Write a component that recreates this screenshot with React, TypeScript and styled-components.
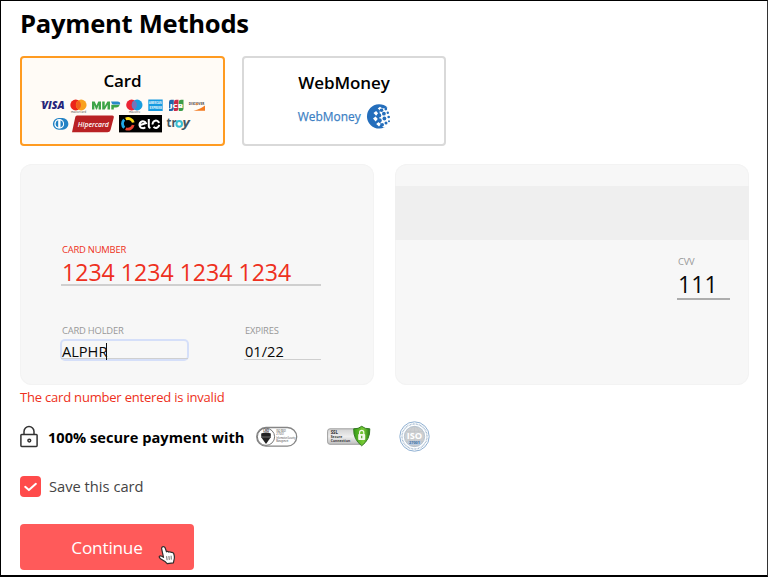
import React from "react";
import styled, { createGlobalStyle } from "styled-components";

const GlobalStyle = createGlobalStyle`
  *, *::before, *::after { box-sizing: border-box; }
  body { margin: 0; background: #fff; font-family: "Open Sans", "Noto Sans", sans-serif; color: #000; }
  h1, p { margin: 0; }
  svg { display: block; flex: none; overflow: visible; }
  svg text { font-family: "Open Sans", "Noto Sans", sans-serif; }
`;

const Page = styled.main`
  position: relative;
  width: 768px;
  height: 577px;
  overflow: hidden;
  padding: 4px 18px 0 19px;
  border: solid #000;
  border-width: 1px 1px 2px 1px;
  border-right-color: #333;
  display: flex;
  flex-direction: column;
  align-items: flex-start;
`;

const Title = styled.h1`
  height: 51px;
  line-height: 38px;
  font-size: 25.6px;
  font-weight: 700;
  letter-spacing: -0.27px;
  white-space: nowrap;
`;

const Row = styled.div<{ $gap: number }>`
  display: flex;
  gap: ${(p) => p.$gap}px;
`;

const Method = styled.button<{ $active?: boolean }>`
  width: ${(p) => (p.$active ? 205 : 204)}px;
  height: 90px;
  padding: ${(p) => (p.$active ? 10 : 12)}px 0 0;
  border: 2px solid ${(p) => (p.$active ? "#ff9b21" : "#d9d9d9")};
  border-radius: 4px;
  background: ${(p) => (p.$active ? "#fffbf6" : "#fff")};
  display: flex;
  flex-direction: column;
  align-items: center;
  font-family: inherit;
  color: #000;
`;

const MethodName = styled.span`
  height: 31px;
  line-height: 26px;
  font-size: 17px;
  font-weight: 600;
  letter-spacing: -0.1px;
`;

const LogoRow = styled.span<{ $height: number; $gap: number; $shift: number }>`
  display: flex;
  height: ${(p) => p.$height}px;
  gap: ${(p) => p.$gap}px;
  padding-left: ${(p) => p.$shift}px;
`;

const WebMoneyMark = styled.span`
  margin: 3px 1px 0 0;
`;

const Panels = styled.section`
  display: flex;
  gap: 21px;
  margin-top: 18px;
`;

const Panel = styled.div<{ $front?: boolean }>`
  width: 354px;
  height: 221px;
  border-radius: 12px;
  background: #f7f7f7;
  box-shadow: inset 0 0 0 1px #f3f3f3;
  padding: ${(p) => (p.$front ? "78px 53px 0 41px" : "22px 0 0")};
`;

const Stripe = styled.div`
  height: 54px;
  background: #efefef;
`;

const Field = styled.label<{ $width: number }>`
  display: block;
  width: ${(p) => p.$width}px;
`;

const Label = styled.span<{ $error?: boolean }>`
  display: block;
  height: 16px;
  padding-left: 1px;
  font-size: 9.4px;
  line-height: 15px;
  letter-spacing: -0.2px;
  color: ${(p) => (p.$error ? "#ee3020" : "#989898")};
`;

const Value = styled.span<{ $size: "small" | "cvv" | "large"; $error?: boolean }>`
  display: block;
  height: ${(p) => (p.$size === "small" ? 21 : p.$size === "cvv" ? 29 : 28)}px;
  line-height: ${(p) => (p.$size === "small" ? 24 : p.$size === "cvv" ? 27 : 28)}px;
  padding-left: 1px;
  font-size: ${(p) => (p.$size === "small" ? 14.6 : p.$size === "cvv" ? 22.8 : 23.1)}px;
  color: ${(p) => (p.$error ? "#ee3020" : "#080808")};
  border-bottom: ${(p) => (p.$size === "small" ? 1 : 2)}px solid
    ${(p) => (p.$size === "cvv" ? "#adadad" : "#cfcfcf")};
  white-space: pre;
`;

const FocusRing = styled.span`
  display: block;
  width: 129px;
  height: 22px;
  margin: 0 0 0 -1px;
  padding: 0 1px;
  border-radius: 5px;
  box-shadow: inset 0 0 0 2px #d5dff9;

  ${Value} {
    height: 20px;
  }
`;

const Caret = styled.i`
  display: inline-block;
  width: 1px;
  height: 17px;
  margin-left: -1px;
  background: #111;
  vertical-align: -3px;
`;

const LowerFields = styled.div`
  display: flex;
  justify-content: space-between;
  margin-top: 37px;
  width: 260px;
`;

const CvvArea = styled.div`
  padding: 14px 0 0 282px;

  ${Value} {
    margin-top: 1px;
    letter-spacing: 0.2px;
  }
`;

const ErrorText = styled.p`
  height: 36px;
  line-height: 25px;
  font-size: 13px;
  letter-spacing: -0.2px;
  color: #ee3020;
`;

const Secure = styled.div`
  display: flex;
  align-items: center;
  height: 31px;
`;

const SecureText = styled.strong`
  width: 218px;
  padding-left: 10px;
  font-size: 14.6px;
  font-weight: 700;
  letter-spacing: 0.02px;
  line-height: 20px;
  white-space: nowrap;
`;

const Badge = styled.span<{ $space: number }>`
  margin-right: ${(p) => p.$space}px;
`;

const Save = styled.label`
  display: flex;
  align-items: center;
  gap: 8px;
  height: 22px;
  margin-top: 23px;
  font-size: 14.7px;
  color: #444;
`;

const Check = styled.span`
  width: 21px;
  height: 21px;
  border-radius: 4px;
  background: #ff4b4b;
`;

const Continue = styled.button`
  position: relative;
  width: 174px;
  height: 46px;
  margin-top: 27px;
  padding: 1px 0 0;
  border: 0;
  border-radius: 4px;
  background: #ff5a5a;
  color: #fff;
  font-family: inherit;
  font-size: 17.2px;
  letter-spacing: -0.2px;
`;

const Pointer = styled.svg`
  position: absolute;
  left: 138px;
  top: 21px;
`;

const Visa = () => (
  <svg width="25" height="15" viewBox="0 0 25 15">
    <text x="1.5" y="10.3" fontSize="10.6" fontWeight="800" fontStyle="italic" fill="#25247b" textLength="23" lengthAdjust="spacingAndGlyphs">VISA</text>
    <path d="M0 2.6h3.6l1.6 2.8Q3 3.3 0 2.6" fill="#25247b" />
  </svg>
);

const Mastercard = () => (
  <svg width="17" height="15" viewBox="0 0 17 15">
    <circle cx="5.7" cy="6" r="5.4" fill="#ec2419" />
    <circle cx="11.2" cy="6" r="5.4" fill="#f9a11d" />
    <path d="M8.5 1.5a5.3 5.3 0 0 1 0 9a5.3 5.3 0 0 1 0-9" fill="#f25e1c" />
    <text x="1" y="13.6" fontSize="2.6" fill="#333" textLength="15">mastercard</text>
  </svg>
);

const Mir = () => (
  <svg width="29" height="15" viewBox="0 0 29 15">
    <path d="M0 10.5v-8h2.7l1.8 4 1.8-4H9v8H6.6V6L5 10.5H4L2.4 6v4.5ZM10.2 10.5v-8h2.5v4.7l2.7-4.7H18v8h-2.5V5.8l-2.7 4.7ZM19.3 10.5V5.8h8.5Q27 8.5 24.2 8.5h-2.4v2Z" fill="#3da447" />
    <path d="M19 2.5h6.4Q28.8 2.5 28 5.5h-6.4Q19.5 5 19 2.5" fill="#2889c9" />
  </svg>
);

const Maestro = () => (
  <svg width="17" height="15" viewBox="0 0 17 15">
    <circle cx="5.6" cy="6" r="5.4" fill="#ec2435" />
    <circle cx="11.1" cy="6" r="5.4" fill="#199ddd" />
    <path d="M8.4 1.5a5.3 5.3 0 0 1 0 9a5.3 5.3 0 0 1 0-9" fill="#7872b8" />
    <text x="3" y="13.6" fontSize="2.6" fill="#333" textLength="11">maestro</text>
  </svg>
);

const Amex = () => (
  <svg width="15" height="15" viewBox="0 0 15 15">
    <rect x=".3" y=".5" width="14.4" height="11.5" fill="#179ae0" />
    <g fontSize="3" fontWeight="700" fill="#f0faff">
      <text x="1" y="5.3" textLength="12.6" lengthAdjust="spacingAndGlyphs">AMERICAN</text>
      <text x="1.5" y="9.7" textLength="12.4" lengthAdjust="spacingAndGlyphs">EXPRESS</text>
    </g>
  </svg>
);

const Jcb = () => (
  <svg width="16" height="15" viewBox="0 0 16 15">
    <path d="M3 .7h2.8v9Q5.8 12 3.5 12H1V3Q1 .7 3 .7" fill="#2166aa" />
    <path d="M8 .7h2.5v9q0 2.3-2.3 2.3H6V3Q6 .7 8 .7" fill="#cb2948" />
    <path d="M13 .7h2.5v9q0 2.3-2.1 2.3h-2.6V3q0-2.3 2.2-2.3" fill="#3b9c48" />
    <text x="1.8" y="8.5" fontSize="5.8" fontWeight="800" fill="#fff" textLength="13.2" lengthAdjust="spacingAndGlyphs">JCB</text>
  </svg>
);

const Discover = () => (
  <svg width="18" height="15" viewBox="0 0 18 15">
    <path d="M17 6.6v5.1H5.5Q13 10 17 6.6" fill="#f47b20" />
    <text x=".8" y="6.2" fontSize="3.2" fontWeight="700" fill="#47434a" textLength="15.4" lengthAdjust="spacingAndGlyphs">DISCOVER</text>
    <circle cx="8.7" cy="5.1" r="1.2" fill="#e48b45" />
  </svg>
);

const Diners = () => (
  <svg width="15" height="18" viewBox="0 0 15 18">
    <path d="M5.8 3h3.7a5.7 5.7 0 0 1 0 11.8H5.8A5.9 5.9 0 0 1 5.8 3" fill="#2382c4" />
    <circle cx="6.2" cy="8.9" r="4.9" fill="#fff" />
    <path d="M5.2 5.2v7.4a3.9 3.9 0 0 1 0-7.4M7.5 5.2a3.9 3.9 0 0 1 0 7.4Z" fill="#2382c4" />
  </svg>
);

const Hipercard = () => (
  <svg width="43" height="18" viewBox="0 0 43 18">
    <path d="M5 .5h35.3q2 0 1.5 2L38.5 15q-.6 2.3-3 2.3H0L3.3 2Q3.6.5 5 .5" fill="#b92124" />
    <text x="5.8" y="11.5" fontSize="7.6" fontStyle="italic" fontWeight="600" fill="#fff" textLength="31" lengthAdjust="spacingAndGlyphs">Hipercard</text>
  </svg>
);

const Elo = () => (
  <svg width="43" height="18" viewBox="0 0 43 18">
    <rect width="43" height="17.4" fill="#000" />
    <g fill="none" strokeWidth="2.8">
      <path d="M6.7 4.1A5.4 5.4 0 0 1 14.3 7.5" stroke="#ffdf19" />
      <path d="M5.3 12.8A5.4 5.4 0 0 1 5.2 4.8" stroke="#20a9e9" />
      <path d="M14.2 10A5.4 5.4 0 0 1 6.7 13.7" stroke="#ee4230" />
    </g>
    <path d="M20.4 10.3l6.5-2.1a3.4 3.4 0 1 0-.7 4M29.8 4v7.2q0 1.2 1.6 1.8M40 8.1a3.2 3.2 0 0 0-6.3 1.5M34.5 11.9a3.2 3.2 0 0 0 5.6-2" fill="none" stroke="#fff" strokeWidth="2" />
  </svg>
);

const Troy = () => (
  <svg width="26" height="18" viewBox="0 0 26 18">
    <g fontSize="12" fontWeight="700" fill="#425663">
      <text x=".6" y="12.2" textLength="10" lengthAdjust="spacingAndGlyphs">tr</text>
      <text x="16.5" y="12.2" textLength="7.3" lengthAdjust="spacingAndGlyphs" fontStyle="italic">y</text>
    </g>
    <circle cx="13.2" cy="8.9" r="2.8" fill="none" stroke="#36bdd2" strokeWidth="2" />
  </svg>
);

const WebMoneyLogo = () => (
  <svg width="94" height="26" viewBox="0 0 94 26">
    <text x=".8" y="17.4" fontSize="13.5" fontWeight="500" fill="#3c7fc4" stroke="#3c7fc4" strokeWidth=".25" textLength="63" lengthAdjust="spacingAndGlyphs">WebMoney</text>
    <path d="M90.5 3.5A12.2 12.2 0 1 0 91 20.8L88 12Z" fill="#246ebc" />
    <g fill="#fff">
      <path d="M80.7 4.4l2.3-1.7 2.5 1.7-2.3 2ZM76.5 9l2.6-2 2.2 2.4-2.2 2.3ZM76 14.6l2.6-2 2.2 2.4-2.2 2.4ZM79.2 20l2.3-2 2.5 2.1-2 2.3ZM85 22.6l2.2-2 2.3 1.2-2.3 1.9Z" />
      <path d="M83 5l10-2v21l-8-2-3-7Z" />
    </g>
    <g fill="#246ebc">
      <circle cx="84.5" cy="6.3" r="1.8" /><circle cx="88.8" cy="5" r="1.4" />
      <circle cx="82.2" cy="11.4" r="2.1" /><circle cx="86.9" cy="9.7" r="1.9" /><circle cx="90.8" cy="8.7" r="1.2" />
      <circle cx="82.7" cy="16.4" r="2.1" /><circle cx="87.4" cy="14.5" r="1.9" /><circle cx="91.7" cy="13" r="1.3" />
      <circle cx="85.2" cy="20.7" r="1.8" /><circle cx="89" cy="18.9" r="1.5" /><circle cx="92" cy="17.3" r="1" />
    </g>
  </svg>
);

const Lock = () => (
  <svg width="18" height="22" viewBox="0 0 18 22" fill="none" stroke="#333" strokeWidth="1.5">
    <rect x=".9" y="8.4" width="16.2" height="12" rx=".8" />
    <path d="M4 8.3V5.5a5 5 0 0 1 10 0v2.8" />
    <circle cx="9.3" cy="14.6" r="1.4" />
  </svg>
);

const LrqaBadge = () => (
  <svg width="42" height="22" viewBox="0 0 42 22">
    <rect x=".7" y="1.5" width="40" height="18.6" rx="9.3" fill="#fff" stroke="#858585" strokeWidth="1.3" />
    <circle cx="10" cy="10.8" r="8.6" fill="#fff" stroke="#777" strokeWidth="1" />
    <path d="M5.2 7.5q4.8-2 9.6 0v3.8L10 18l-4.8-6.7Z" fill="#222" />
    <path d="M5 11h10" stroke="#aaa" strokeWidth=".6" />
    <text x="7.2" y="5.9" fontSize="3" fontWeight="700" fill="#444">LRQ</text>
    <g fontSize="2.6" fill="#333">
      <text x="20.3" y="6" textLength="10">ISO 9001</text>
      <text x="20.3" y="9.3" textLength="8">27001</text>
      <text x="20.3" y="12.6" textLength="19" lengthAdjust="spacingAndGlyphs">Information Security</text>
      <text x="20.3" y="15.9" textLength="12" lengthAdjust="spacingAndGlyphs">Management</text>
    </g>
  </svg>
);

const SslBadge = () => (
  <svg width="44" height="22" viewBox="0 0 44 22">
    <defs>
      <linearGradient id="silver" x2="0" y2="1"><stop stopColor="#d2d2d2" /><stop offset=".5" stopColor="#eee" /><stop offset="1" stopColor="#bebebe" /></linearGradient>
      <linearGradient id="green"><stop stopColor="#359b16" /><stop offset=".6" stopColor="#78cb34" /><stop offset="1" stopColor="#267c15" /></linearGradient>
    </defs>
    <rect x=".6" y="2.8" width="37" height="15.5" rx="2.4" fill="url(#silver)" stroke="#a0a0a0" />
    <g fontWeight="700" fill="#333">
      <text x="3.7" y="8" fontSize="4.4">SSL</text>
      <text x="3.7" y="12" fontSize="3.3" textLength="11.5">Secure</text>
      <text x="3.7" y="15.9" fontSize="3.3" textLength="19.5">Connection</text>
    </g>
    <path d="M34.7.3Q38 3.1 42.8 2.8 43.3 13.5 34.7 19.8 26.2 13.5 26.7 2.8 31.4 3.1 34.7.3" fill="url(#green)" stroke="#347b22" />
    <rect x="31.2" y="8.1" width="7" height="6" rx=".8" fill="#f3f8e9" />
    <path d="M32.6 8.3V6.5a2.1 2.1 0 0 1 4.2 0v1.8" fill="none" stroke="#f3f8e9" strokeWidth="1.2" />
    <path d="M34.7 9.7v2.6" stroke="#5aa632" strokeWidth="1.2" />
  </svg>
);

const IsoBadge = () => (
  <svg width="32" height="32" viewBox="0 0 32 32">
    <circle cx="15.5" cy="15.5" r="14.7" fill="#fff" stroke="#8fb0d2" strokeWidth="1" />
    <circle cx="15.5" cy="15.5" r="12.5" fill="none" stroke="#9bb3cb" strokeWidth="1.4" strokeDasharray=".8 .7" />
    <circle cx="15.5" cy="15.5" r="10.2" fill="#ccced0" stroke="#a5b9cc" strokeWidth=".7" />
    <g fill="none" stroke="#bcc0c4" strokeWidth=".4">
      <ellipse cx="15.5" cy="15.5" rx="5" ry="10" /><path d="M15.5 5.3v20.4M6.5 10.5h18M6.5 20.5h18" />
    </g>
    <text x="7.7" y="17.8" fontSize="8" fontWeight="700" fill="#fff" textLength="15.5" lengthAdjust="spacingAndGlyphs">ISO</text>
    <rect x="9" y="19.8" width="13" height="4.2" fill="#b9cbe0" />
    <text x="10" y="23.2" fontSize="3.4" fontWeight="700" fill="#426b9c" textLength="11" lengthAdjust="spacingAndGlyphs">27001</text>
  </svg>
);

export default function App() {
  return (
    <>
      <GlobalStyle />
      <Page>
        <Title>Payment Methods</Title>
        <Row $gap={17}>
          <Method $active>
            <MethodName>Card</MethodName>
            <LogoRow $height={16} $gap={4.9} $shift={1.5}>
              <Visa /><Mastercard /><Mir /><Maestro /><Amex /><Jcb /><Discover />
            </LogoRow>
            <LogoRow $height={18} $gap={4.3} $shift={0}>
              <Diners /><Hipercard /><Elo /><Troy />
            </LogoRow>
          </Method>
          <Method>
            <MethodName>WebMoney</MethodName>
            <WebMoneyMark><WebMoneyLogo /></WebMoneyMark>
          </Method>
        </Row>
        <Panels>
          <Panel $front>
            <Field $width={260}>
              <Label $error>CARD NUMBER</Label>
              <Value $size="large" $error>1234 1234 1234 1234</Value>
            </Field>
            <LowerFields>
              <Field $width={128}>
                <Label>CARD HOLDER</Label>
                <FocusRing><Value $size="small">ALPHR<Caret /></Value></FocusRing>
              </Field>
              <Field $width={77}>
                <Label>EXPIRES</Label>
                <Value $size="small">01/22</Value>
              </Field>
            </LowerFields>
          </Panel>
          <Panel>
            <Stripe />
            <CvvArea>
              <Field $width={53}>
                <Label>CVV</Label>
                <Value $size="cvv">111</Value>
              </Field>
            </CvvArea>
          </Panel>
        </Panels>
        <ErrorText>The card number entered is invalid</ErrorText>
        <Secure>
          <Lock />
          <SecureText>100% secure payment with</SecureText>
          <Badge $space={29}><LrqaBadge /></Badge>
          <Badge $space={28}><SslBadge /></Badge>
          <Badge $space={0}><IsoBadge /></Badge>
        </Secure>
        <Save>
          <Check>
            <svg width="21" height="21" viewBox="0 0 21 21"><path d="M5.2 10.8l3.7 3.3 7-6.3" fill="none" stroke="#fff" strokeWidth="2" strokeLinecap="round" strokeLinejoin="round" /></svg>
          </Check>
          Save this card
        </Save>
        <Continue>
          Continue
          <Pointer width="19" height="20" viewBox="0 0 19 20">
            <path d="M4.9 1.7q1.6-.5 2.2 1.1l1.4 4q1.3-.8 2.3.3 1.3-.8 2.4.3 1.9-.5 2.5 1.1.8 2.4.7 4.5l-1 4.8-6.2.9-1.8-1.9-4.9-3.1Q.6 12.2 1.5 11.2q1.2-1 4 1.1L3.6 3.6q-.2-1.5 1.3-1.9" fill="#fff" stroke="#302c2c" strokeWidth="1.2" strokeLinejoin="round" />
            <path d="M8.6 11.2l.5 4M10.9 11l.4 3.9M13.1 10.7l.2 3.9" stroke="#514949" strokeWidth=".8" />
          </Pointer>
        </Continue>
      </Page>
    </>
  );
}
